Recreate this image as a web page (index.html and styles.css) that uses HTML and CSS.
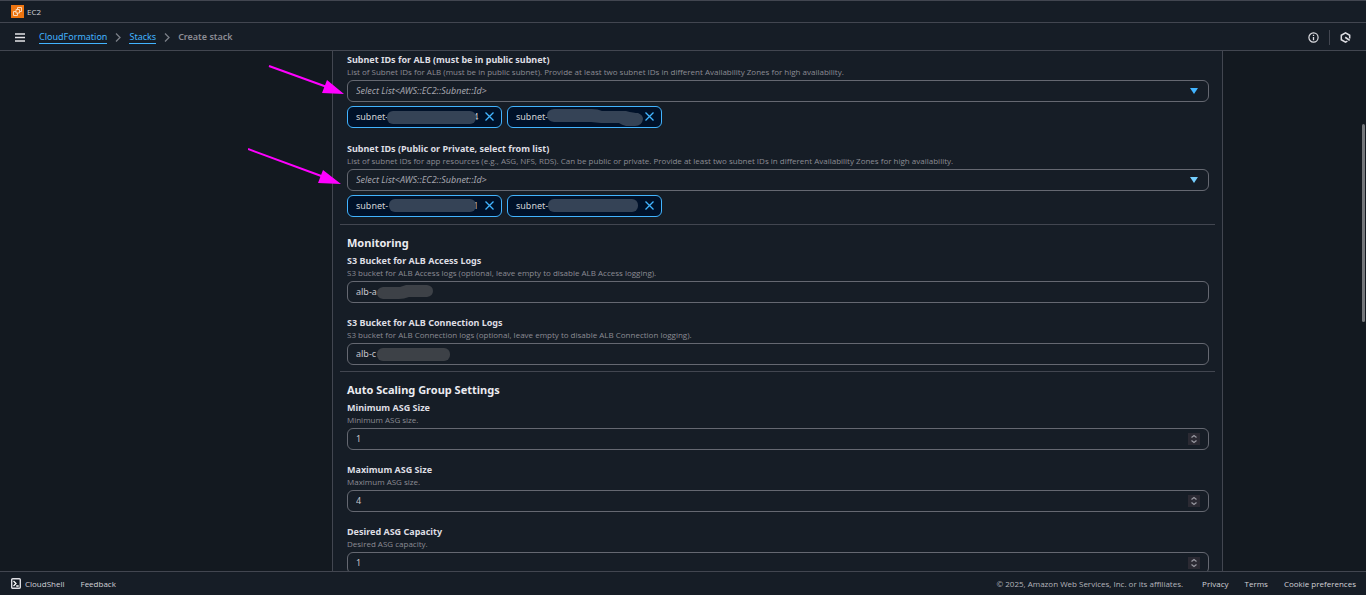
FILE: index.html
```html
<!DOCTYPE html>
<html lang="en">
<head>
    <meta charset="UTF-8">
    <meta name="viewport" content="width=device-width, initial-scale=1.0">
    <title>Create stack</title>
    <link rel="stylesheet" href="styles.css">
</head>
<body>
  <div class="favorites">
    <a href="#" class="favorite">
      <svg width="13" height="13" viewBox="0 0 13 13">
        <rect width="13" height="13" fill="#ed7511"/>
        <path d="M5 4.500h3.500v3.500h-3.500zM6.500 4.500v-2h4v4h-2M5 6.500h-2.500v4h4v-2.500" fill="none" stroke="#fbd9b8"/>
      </svg>
      EC2
    </a>
  </div>

  <header class="topbar">
    <button class="icon_button" aria-label="Open navigation">
      <svg width="10" height="9" viewBox="0 0 10 9"><path d="M0 1h10M0 4.500h10M0 8h10" stroke="#e4e4e8" stroke-width="1.400"/></svg>
    </button>
    <nav class="breadcrumbs">
      <a href="#">CloudFormation</a>
      <svg width="6" height="9" viewBox="0 0 6 9"><path d="M1 .5l4 4-4 4" fill="none" stroke="#7b7f88" stroke-width="1.300"/></svg>
      <a href="#">Stacks</a>
      <svg width="6" height="9" viewBox="0 0 6 9"><path d="M1 .5l4 4-4 4" fill="none" stroke="#7b7f88" stroke-width="1.300"/></svg>
      <span>Create stack</span>
    </nav>
    <div class="tools">
      <button class="icon_button" aria-label="Info">
        <svg width="11" height="11" viewBox="0 0 11 11"><circle cx="5.500" cy="5.500" r="4.600" fill="none" stroke="#dedee3" stroke-width="1.200"/><path d="M5.500 5v3.200M5.500 2.700v1.300" stroke="#dedee3" stroke-width="1.300"/></svg>
      </button>
      <button class="icon_button last" aria-label="Amazon Q">
        <svg width="11" height="11" viewBox="0 0 11 11"><path d="M9.700 6.500V3.300L5.500.9 1.300 3.300v4.400l4.200 2.400 1.900-1" fill="none" stroke="#dedee3" stroke-width="1.500"/><path d="M5.200 5.200l4.500 3.200" stroke="#dedee3" stroke-width="1.700"/></svg>
      </button>
    </div>
  </header>

  <main class="main">
    <form class="panel">
      <section class="section">
        <div class="field">
          <label for="alb_subnets">Subnet IDs for ALB (must be in public subnet)</label>
          <p>List of Subnet IDs for ALB (must be in public subnet). Provide at least two subnet IDs in different Availability Zones for high availability.</p>
          <div class="control">
            <select id="alb_subnets"><option>Select List&lt;AWS::EC2::Subnet::Id&gt;</option></select>
            <svg class="caret" width="8" height="6" viewBox="0 0 8 6"><path d="M0 0h8L4 6z" fill="#42b4ff"/></svg>
          </div>
          <div class="tokens">
            <div class="token">
              <span>subnet-</span>
              <svg class="mask" width="90" height="16" viewBox="0 0 90 16"><rect x="0" y="2" width="89" height="13" rx="6" fill="#354356"/></svg>
              <span class="tail">4</span>
              <button type="button" aria-label="Remove subnet"><svg width="9" height="9" viewBox="0 0 9 9"><path d="M.5.5l8 8M8.500.5l-8 8" stroke="#42b4ff" stroke-width="1.300"/></svg></button>
            </div>
            <div class="token">
              <span>subnet-</span>
              <svg class="mask" width="98" height="20" viewBox="0 0 98 20"><path d="M7 2h38q6 0 10 2h24q8 2 12 2 5 2 5 6-1 7-8 7H79q-4-1-7-3H54l-10-1H7q-7-1-7-7 0-5 7-6z" fill="#354356"/></svg>
              <button type="button" aria-label="Remove subnet"><svg width="9" height="9" viewBox="0 0 9 9"><path d="M.5.5l8 8M8.500.5l-8 8" stroke="#42b4ff" stroke-width="1.300"/></svg></button>
            </div>
          </div>
        </div>
        <div class="field">
          <label for="app_subnets">Subnet IDs (Public or Private, select from list)</label>
          <p>List of subnet IDs for app resources (e.g., ASG, NFS, RDS). Can be public or private. Provide at least two subnet IDs in different Availability Zones for high availability.</p>
          <div class="control">
            <select id="app_subnets"><option>Select List&lt;AWS::EC2::Subnet::Id&gt;</option></select>
            <svg class="caret" width="8" height="6" viewBox="0 0 8 6"><path d="M0 0h8L4 6z" fill="#75cfff"/></svg>
          </div>
          <div class="tokens">
            <div class="token">
              <span>subnet-</span>
              <svg class="mask" width="90" height="16" viewBox="0 0 90 16"><rect x="2" y="1" width="87" height="13" rx="6" fill="#354356"/></svg>
              <span class="tail">1</span>
              <button type="button" aria-label="Remove subnet"><svg width="9" height="9" viewBox="0 0 9 9"><path d="M.5.5l8 8M8.500.5l-8 8" stroke="#42b4ff" stroke-width="1.300"/></svg></button>
            </div>
            <div class="token">
              <span>subnet-</span>
              <svg class="mask" width="92" height="16" viewBox="0 0 92 16"><rect x="1" y="1" width="90" height="13" rx="6" fill="#354356"/></svg>
              <button type="button" aria-label="Remove subnet"><svg width="9" height="9" viewBox="0 0 9 9"><path d="M.5.5l8 8M8.500.5l-8 8" stroke="#42b4ff" stroke-width="1.300"/></svg></button>
            </div>
          </div>
        </div>
      </section>

      <section class="section">
        <h2>Monitoring</h2>
        <div class="field">
          <label for="access_logs">S3 Bucket for ALB Access Logs</label>
          <p>S3 bucket for ALB Access logs (optional, leave empty to disable ALB Access logging).</p>
          <div class="control">
            <input type="text" id="access_logs" value="alb-a">
            <svg class="smudge" width="58" height="16" viewBox="0 0 58 16"><path d="M7 3h17l6-2h21q6 1 6 6t-6 6H33q-5 2-10 2H7q-6-1-6-6t6-6z" fill="#3d4147"/></svg>
          </div>
        </div>
        <div class="field">
          <label for="connection_logs">S3 Bucket for ALB Connection Logs</label>
          <p>S3 bucket for ALB Connection logs (optional, leave empty to disable ALB Connection logging).</p>
          <div class="control">
            <input type="text" id="connection_logs" value="alb-c">
            <svg class="smudge" width="74" height="16" viewBox="0 0 74 16"><rect x="1" y="2" width="73" height="13" rx="6" fill="#3d4147"/></svg>
          </div>
        </div>
      </section>

      <section class="section">
        <h2>Auto Scaling Group Settings</h2>
        <div class="field">
          <label for="min_size">Minimum ASG Size</label>
          <p>Minimum ASG size.</p>
          <div class="control">
            <input type="number" id="min_size" value="1">
            <svg class="stepper" width="12" height="12" viewBox="0 0 12 12"><rect width="12" height="12" fill="#2b2a33"/><path d="M3.500 4.500L6 2.500l2.500 2M3.500 7.500L6 9.500l2.500-2" fill="none" stroke="#9a9aa2" stroke-width="1.200"/></svg>
          </div>
        </div>
        <div class="field">
          <label for="max_size">Maximum ASG Size</label>
          <p>Maximum ASG size.</p>
          <div class="control">
            <input type="number" id="max_size" value="4">
            <svg class="stepper" width="12" height="12" viewBox="0 0 12 12"><rect width="12" height="12" fill="#2b2a33"/><path d="M3.500 4.500L6 2.500l2.500 2M3.500 7.500L6 9.500l2.500-2" fill="none" stroke="#9a9aa2" stroke-width="1.200"/></svg>
          </div>
        </div>
        <div class="field">
          <label for="desired">Desired ASG Capacity</label>
          <p>Desired ASG capacity.</p>
          <div class="control">
            <input type="number" id="desired" value="1">
            <svg class="stepper" width="12" height="12" viewBox="0 0 12 12"><rect width="12" height="12" fill="#2b2a33"/><path d="M3.500 4.500L6 2.500l2.500 2M3.500 7.500L6 9.500l2.500-2" fill="none" stroke="#9a9aa2" stroke-width="1.200"/></svg>
          </div>
        </div>
      </section>
    </form>

    <!-- arrows that point at the two subnet lists -->
    <svg class="arrows" width="100" height="124" viewBox="0 0 100 124">
      <g stroke="#ff00ff" stroke-width="2" fill="#ff00ff">
        <path d="M21 5l58 21M0 88l76 28"/>
        <path stroke="none" d="M96 33l-22-1 5-13zM93 123l-23-1 5-13z"/>
      </g>
    </svg>
    <div class="thumb"></div>
  </main>

  <footer class="footer">
    <a href="#" class="shell">
      <svg width="10" height="11" viewBox="0 0 10 11"><rect x=".7" y=".7" width="8.600" height="9.600" rx="1" fill="none" stroke="#dedee3" stroke-width="1.400"/><path d="M2.500 3l2.500 2.500L2.500 8M5.200 8h2.500" fill="none" stroke="#fff" stroke-width="1.300"/></svg>
      CloudShell
    </a>
    <a href="#">Feedback</a>
    <span class="copyright">© 2025, Amazon Web Services, Inc. or its affiliates.</span>
    <a href="#">Privacy</a>
    <a href="#">Terms</a>
    <a href="#">Cookie preferences</a>
  </footer>
</body>
</html>
```

FILE: styles.css
```css
* {
  margin: 0;
  padding: 0;
  box-sizing: border-box;
}

body {
  display: flex;
  flex-direction: column;
  height: 100vh;
  overflow: hidden;
  background-color: #131920;
  color: #d1d1d6;
  font-family: "Noto Sans", "Open Sans", sans-serif;
  font-size: 9px;
}

svg {
  display: block;
  flex-shrink: 0;
}

button {
  border: none;
  background: none;
  cursor: pointer;
}

.favorites {
  display: flex;
  align-items: center;
  height: 23px;
  padding-left: 11px;
  background-color: #161d26;
  border-top: 1px solid #424650;
  border-bottom: 1px solid #424650;
}

.favorite {
  display: flex;
  align-items: center;
  gap: 3px;
  color: #d1d1d6;
  font-family: "Open Sans", sans-serif;
  font-size: 8px;
  text-decoration: none;
}

.topbar {
  display: flex;
  align-items: center;
  height: 28px;
  padding: 1px 15px 0;
  background-color: #161d26;
  border-bottom: 1px solid #424650;
}

.breadcrumbs {
  display: flex;
  align-items: center;
  gap: 8px;
  margin-left: 14px;
  line-height: 12px;
}

.breadcrumbs a {
  color: #42b4ff;
  text-decoration: none;
  border-bottom: 1px solid #42b4ff;
}

.breadcrumbs span {
  color: #8c8c94;
  font-weight: 600;
}

.tools {
  display: flex;
  align-items: center;
  gap: 10px;
  margin-left: auto;
}

.tools .last {
  padding: 2px 0 2px 10px;
  border-left: 1px solid #424650;
}

.main {
  position: relative;
  flex: 1;
  min-height: 0;
  overflow: hidden;
  padding: 0 143px 0 332px;
}

.panel {
  padding: 2px 7px 0;
  background-color: #161d26;
  border-left: 1px solid #424650;
  border-right: 1px solid #424650;
}

.section {
  padding: 0 6px 6px 7px;
}

.section + .section {
  padding-top: 10px;
  border-top: 1px solid #424650;
}

.section h2 {
  margin-bottom: 3px;
  color: #ebebf0;
  font-size: 11px;
  line-height: 16px;
}

.field + .field {
  margin-top: 13px;
}

.field label {
  display: block;
  color: #dedee3;
  font-weight: bold;
  line-height: 14px;
}

.field p {
  margin-bottom: 3px;
  color: #8c8c94;
  font-family: "Open Sans", sans-serif;
  font-size: 8px;
  line-height: 10px;
  white-space: nowrap;
}

.control {
  position: relative;
  display: flex;
  align-items: center;
  height: 22px;
  padding: 0 8px 1px;
  border: 1px solid #656871;
  border-radius: 6px;
}

.control input,
.control select {
  flex: 1;
  min-width: 0;
  border: none;
  outline: none;
  background: none;
  color: #c6c6cd;
  font-family: inherit;
  font-size: 9px;
  appearance: none;
}

.control input::-webkit-inner-spin-button {
  display: none;
}

.control select {
  color: #a4a4ad;
  font-style: italic;
}

.caret {
  margin-right: 2px;
}

.smudge {
  position: absolute;
  left: 28px;
  top: 2px;
}

.tokens {
  display: flex;
  gap: 5px;
  padding: 4px 0 1px;
}

.token {
  display: flex;
  align-items: center;
  width: 155px;
  height: 22px;
  padding: 0 7px 1px 8px;
  background-color: #001129;
  border: 1px solid #42b4ff;
  border-radius: 6px;
}

.token button {
  margin-left: auto;
}

/* the mask runs over the end of the id on both sides */
.mask {
  position: relative;
  margin: 0 -4px 0 -1px;
}

.arrows {
  position: absolute;
  left: 248px;
  top: 10px;
}

.thumb {
  position: absolute;
  right: 1px;
  top: 73px;
  width: 3px;
  height: 198px;
  border-radius: 2px;
  background-color: #75777b;
}

.footer {
  display: flex;
  align-items: center;
  gap: 16px;
  height: 24px;
  padding: 0 10px 0 11px;
  background-color: #161d26;
  border-top: 1px solid #424650;
  font-family: "Open Sans", sans-serif;
  font-size: 8px;
}

.footer a {
  color: #d1d1d6;
  text-decoration: none;
}

.footer .shell {
  display: flex;
  align-items: center;
  gap: 4px;
}

.copyright {
  margin-left: auto;
  margin-right: 3px;
  color: #b4b4bb;
}
```
